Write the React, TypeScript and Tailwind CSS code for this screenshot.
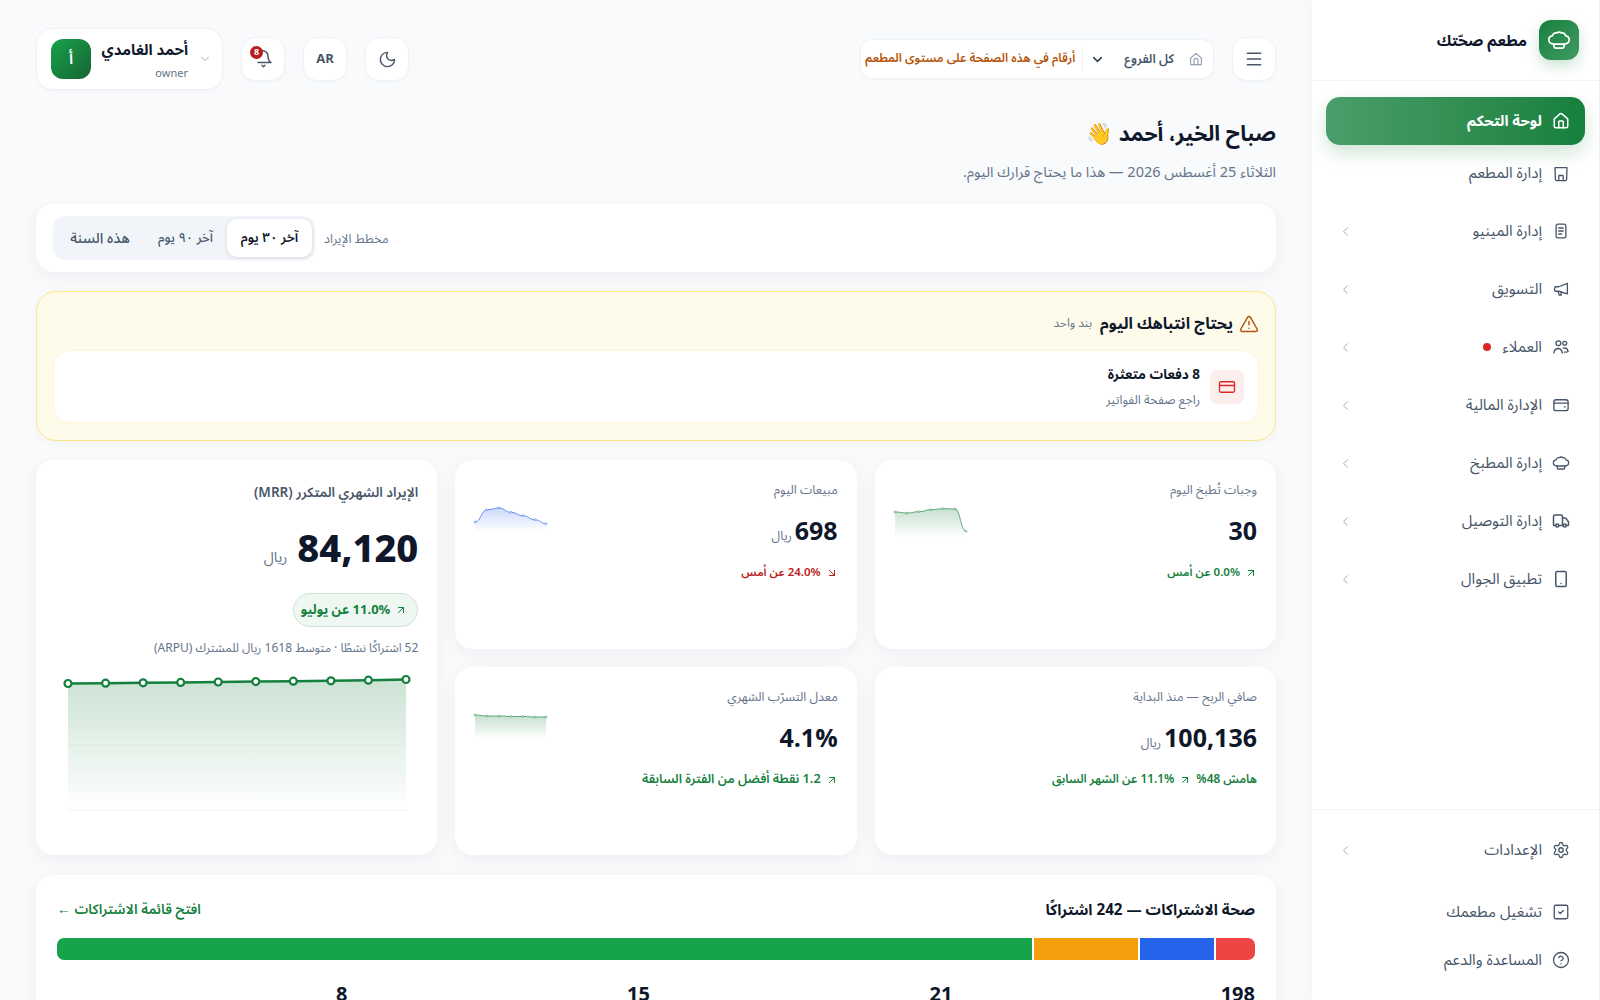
import { ArrowUpRight, ArrowDownRight, ChevronDown, ChevronLeft, CircleHelp, CreditCard, House, Menu, Moon, Settings, Smartphone, SquareCheck, TriangleAlert, Truck } from "lucide-react"
import type { ReactNode } from "react"

type IconProps = { size?: number; className?: string }

function Stroke({ size = 18, className, children }: IconProps & { children: ReactNode }) {
  return (
    <svg width={size} height={size} viewBox="0 0 24 24" fill="none" stroke="currentColor" strokeWidth="1.75" strokeLinecap="round" strokeLinejoin="round" className={className}>
      {children}
    </svg>
  )
}

function HatIcon(props: IconProps) {
  return (
    <Stroke {...props}>
      <path d="M6.5 16C3.8 16 1.8 14.200 1.8 11.800C1.800 9.600 3.300 8 5.400 7.800C6 5.800 7.800 4.600 9.700 4.900C10.900 3.700 13.300 3.700 14.500 4.900C16.400 4.600 18.100 5.800 18.700 7.800C20.800 8 22.200 9.600 22.200 11.800C22.200 14.200 20.200 16 17.500 16Z" />
      <path d="M7 16V18.500C7 19.300 7.700 20 8.500 20H15.500C16.300 20 17 19.300 17 18.500V16" />
    </Stroke>
  )
}

function StoreIcon(props: IconProps) {
  return (
    <Stroke {...props}>
      <path d="M4 3.500H20L19.500 19C19.500 20 18.700 20.800 17.700 20.800H6.300C5.300 20.800 4.500 20 4.500 19Z" />
      <path d="M9 20.800V15C9 14.400 9.400 14 10 14H14C14.600 14 15 14.400 15 15V20.800" />
    </Stroke>
  )
}

function MenuListIcon(props: IconProps) {
  return (
    <Stroke {...props}>
      <rect x="5.500" y="2.800" width="13" height="18.400" rx="2.500" />
      <path d="M9 8H15M9 12H15M9 16H13" />
    </Stroke>
  )
}

function HornIcon(props: IconProps) {
  return (
    <Stroke {...props}>
      <path d="M20.500 4.500V18.500L9 15H5C4.200 15 3.500 14.300 3.500 13.500V10.500C3.500 9.700 4.200 9 5 9H9Z" />
      <path d="M8 15.500L9.500 20H12.500L11.800 16.300" />
    </Stroke>
  )
}

function PeopleIcon(props: IconProps) {
  return (
    <Stroke {...props}>
      <circle cx="8.500" cy="7" r="3.200" />
      <circle cx="17" cy="7" r="2.600" />
      <path d="M2.500 20C3 16.500 5.500 14 8.500 14C11.500 14 13 16.500 13.800 20" />
      <path d="M15 13.500C18 13 20.800 14.800 21.500 18C20 19 18 19 16.500 18.800" />
    </Stroke>
  )
}

function WalletIcon(props: IconProps) {
  return (
    <Stroke {...props}>
      <rect x="2.500" y="5" width="19" height="14.500" rx="3" />
      <path d="M2.500 9.500H21.500M16.500 14.500H17.500" />
    </Stroke>
  )
}

function BranchIcon(props: IconProps) {
  return (
    <Stroke {...props}>
      <path d="M4 10.500L12 3.500L20 10.500V20.500H4Z" />
      <path d="M9 20.500V14C9 12.300 10.300 11 12 11C13.700 11 15 12.300 15 14V20.500" />
    </Stroke>
  )
}

function BellBadge() {
  return (
    <span className="relative block h-5 w-5">
      <svg width="20" height="20" viewBox="0 0 20 20" fill="none" stroke="#475569" strokeWidth="1.4" strokeLinecap="round" strokeLinejoin="round">
        <path d="M9 1.500C12.500 1.800 15 4 15 7.500C15 10 16 12 18 13.500H5" />
        <path d="M9 16.300L10.500 17.800L12 16.300" />
      </svg>
      <span className="absolute -left-[3px] -top-[3px] flex h-[13px] w-[13px] items-center justify-center rounded-full bg-[#b91c1c] text-[9px] font-bold leading-none text-white">8</span>
    </span>
  )
}

type Point = [number, number]

// smooth path through the points, horizontal tangents like a monotone chart curve
function curve(points: Point[]) {
  return points
    .map(([x, y], i) => {
      if (i === 0) return `M${x} ${y}`
      const [px, py] = points[i - 1]
      const mid = (px + x) / 2
      return `C${mid} ${py} ${mid} ${y} ${x} ${y}`
    })
    .join(" ")
}

function Sparkline({ id, color, points, floor }: { id: string; color: string; points: Point[]; floor: number }) {
  const line = curve(points)
  const last = points[points.length - 1]
  return (
    <svg width="72" height="32" viewBox="0 0 72 32" className="shrink-0 overflow-visible">
      <defs>
        <linearGradient id={id} x1="0" y1="0" x2="0" y2="1">
          <stop offset="0%" stopColor={color} stopOpacity="0.24" />
          <stop offset="100%" stopColor={color} stopOpacity="0" />
        </linearGradient>
      </defs>
      <path d={`${line} L${last[0]} ${floor} L${points[0][0]} ${floor} Z`} fill={`url(#${id})`} />
      <path d={line} fill="none" stroke={color} strokeOpacity="0.65" strokeWidth="1" />
      {points.map(([x, y]) => (
        <circle key={x} cx={x} cy={y} r="1" fill="#fff" stroke={color} strokeOpacity="0.65" strokeWidth="0.7" />
      ))}
    </svg>
  )
}

function Trend({ down, size = "text-[11.500px]", children }: { down?: boolean; size?: string; children: ReactNode }) {
  return (
    <div className={`mt-[14px] flex h-[18px] items-center gap-[5px] font-semibold ${size} ${down ? "text-[#b91c1c]" : "text-[#15803d]"}`}>
      {down ? <ArrowDownRight size={12} /> : <ArrowUpRight size={12} />}
      {children}
    </div>
  )
}

function KpiCard({ label, value, unit, spark, children }: { label: string; value: string; unit?: string; spark?: ReactNode; children: ReactNode }) {
  return (
    <div className="flex justify-between rounded-[18px] bg-white pl-[20px] pr-[19px] pt-5 shadow-[0_4px_18px_rgba(15,23,42,0.05)]">
      <div>
        <div className="h-5 text-[12.400px] leading-5 text-[#64748b]">{label}</div>
        <div className="mt-[14px] flex h-9 items-baseline gap-[3px]">
          <span className="text-[25px] font-bold leading-9">{value}</span>
          {unit && <span className="text-[12.500px] text-[#64748b]">{unit}</span>}
        </div>
        {children}
      </div>
      {spark && <div className="mt-[27px]">{spark}</div>}
    </div>
  )
}

const navItems = [
  { label: "إدارة المطعم", icon: StoreIcon, h: "h-[57px]", chevron: false },
  { label: "إدارة المينيو", icon: MenuListIcon, h: "h-[58px]", chevron: true },
  { label: "التسويق", icon: HornIcon, h: "h-[58px]", chevron: true },
  { label: "العملاء", icon: PeopleIcon, h: "h-[58px]", chevron: true, dot: true },
  { label: "الإدارة المالية", icon: WalletIcon, h: "h-[58px]", chevron: true },
  { label: "إدارة المطبخ", icon: HatIcon, h: "h-[58px]", chevron: true },
  { label: "إدارة التوصيل", icon: Truck, h: "h-[58px]", chevron: true },
  { label: "تطبيق الجوال", icon: Smartphone, h: "h-[58px]", chevron: true },
]

const mrrX = [12, 49.6, 87.1, 124.7, 162.2, 199.8, 237.3, 274.9, 312.4, 350]
const mrrY = [13.5, 13.2, 12.8, 12.4, 12, 11.6, 11.2, 10.8, 10.2, 9.500]
const mrrLine = mrrX.map((x, i) => `${i === 0 ? "M" : "L"}${x} ${mrrY[i]}`).join(" ")

const healthBar = [
  { cls: "flex-[8] bg-[#ef4444]" },
  { cls: "flex-[15] bg-[#2563eb]" },
  { cls: "flex-[21] bg-[#f59e0b]" },
  { cls: "flex-[198] bg-[#16a34a]" },
]

const iconButton = "flex h-[44px] w-[44px] items-center justify-center rounded-[14px] border border-[#eef2f6] bg-white text-[#475569] shadow-[0_1px_3px_rgba(15,23,42,0.03)]"

export default function App() {
  return (
    <div dir="rtl" className="flex h-screen overflow-hidden bg-[#f8fafc] font-['Noto_Sans_Arabic','Noto_Sans',sans-serif] text-[#0f172a]">
      <aside className="flex w-72 shrink-0 flex-col border-r border-[#eef2f6] bg-white shadow-[0_0_14px_rgba(15,23,42,0.03)]">
        <div className="flex h-[81px] shrink-0 items-center gap-3 border-b border-[#f1f5f9] pb-[1px] pr-[20px]">
          <div className="flex h-10 w-10 items-center justify-center rounded-xl bg-gradient-to-br from-[#15803d] to-[#3f9a63] text-white shadow-[0_6px_14px_rgba(21,128,61,0.22)]">
            <HatIcon size={24} />
          </div>
          <span className="pt-[4px] text-[15.500px] font-bold">مطعم صحّتك</span>
        </div>

        <nav className="flex flex-1 flex-col pl-[14px] pr-[14px] pt-4">
          <div className="flex h-12 shrink-0 items-center gap-[10px] rounded-[14px] bg-gradient-to-l from-[#15803d] to-[#4a9e6b] pr-[15px] text-[14.800px] font-bold text-white shadow-[0_8px_18px_rgba(21,128,61,0.2)]">
            <House size={18} strokeWidth={2} />
            <span className="pt-[3px]">لوحة التحكم</span>
          </div>
          {navItems.map((item) => (
            <div key={item.label} className={`flex shrink-0 items-center gap-[10px] pl-3 pr-[15px] text-[15.200px] text-[#475569] ${item.h}`}>
              <item.icon size={18} />
              <span>{item.label}</span>
              {item.dot && <span className="mr-[1px] h-2 w-2 rounded-full bg-[#dc2626]" />}
              {item.chevron && <ChevronLeft size={15} strokeWidth={1.5} className="mr-auto text-[#94a3b8]" />}
            </div>
          ))}
        </nav>

        <div className="h-[191px] shrink-0 border-t border-[#f1f5f9] pl-[14px] pr-[14px] pt-[11px] text-[15.200px] text-[#475569]">
          <div className="flex h-[58px] items-center gap-[10px] pl-3 pr-[15px]">
            <Settings size={18} strokeWidth={1.75} />
            <span>الإعدادات</span>
            <ChevronLeft size={15} strokeWidth={1.5} className="mr-auto text-[#94a3b8]" />
          </div>
          <div className="mt-[11px] flex h-11 items-center gap-[10px] pr-[15px]">
            <SquareCheck size={18} strokeWidth={1.75} />
            <span>تشغيل مطعمك</span>
          </div>
          <div className="mt-[4px] flex h-11 items-center gap-[10px] pr-[15px]">
            <CircleHelp size={18} strokeWidth={1.75} />
            <span>المساعدة والدعم</span>
          </div>
        </div>
      </aside>

      <main className="min-w-0 flex-1 px-9 pt-7">
        <header className="flex h-[62px] items-center justify-between">
          <div className="flex items-center gap-[18px]">
            <button className={iconButton}><Menu size={20} strokeWidth={1.75} /></button>
            <div className="flex h-[40px] w-[354px] items-center rounded-xl border border-[#eef2f6] bg-white pr-[9px] shadow-[0_1px_3px_rgba(15,23,42,0.03)]">
              <BranchIcon size={16} className="text-[#94a3b8]" />
              <span className="mr-[14px] whitespace-nowrap text-[12.500px] font-semibold text-[#475569]">كل الفروع</span>
              <ChevronDown size={15} strokeWidth={2.500} className="mr-[19px] text-[#334155]" />
              <span className="mx-[7px] h-6 w-px bg-[#eef2f6]" />
              <span className="whitespace-nowrap text-[12px] font-semibold text-[#b45309]">أرقام في هذه الصفحة على مستوى المطعم</span>
            </div>
          </div>

          <div className="flex items-center gap-[18px]">
            <button className={iconButton}><Moon size={19} strokeWidth={1.75} /></button>
            <button className={`${iconButton} pt-[2px] text-[13px] font-bold`}>AR</button>
            <button className={iconButton}><BellBadge /></button>
            <div className="flex h-[62px] w-[187px] items-center rounded-2xl border border-[#eef2f6] bg-white pl-[14px] pr-[10px] shadow-[0_1px_3px_rgba(15,23,42,0.03)]">
              <ChevronDown size={14} strokeWidth={1.5} className="text-[#94a3b8]" />
              <div className="mr-[10px] flex flex-1 flex-col gap-[6px] pt-[3px]">
                <span className="whitespace-nowrap text-[15px] font-bold leading-5">أحمد الغامدي</span>
                <span className="text-[11px] leading-4 text-[#64748b]">owner</span>
              </div>
              <div className="flex h-10 w-10 shrink-0 items-center justify-center rounded-xl bg-gradient-to-br from-[#16a34a] to-[#166534] text-base font-semibold text-white">أ</div>
            </div>
          </div>
        </header>

        <h1 className="mt-[27px] flex h-9 items-center text-[21.300px] font-bold">صباح الخير، أحمد 👋</h1>
        <p className="mt-[8px] h-6 text-[14.500px] leading-6 text-[#64748b]">الثلاثاء 25 أغسطس 2026 — هذا ما يحتاج قرارك اليوم.</p>

        <section className="mt-[19px] flex h-[68px] items-center justify-end gap-[9px] rounded-[18px] bg-white px-[17px] shadow-[0_4px_18px_rgba(15,23,42,0.05)]">
          <span className="pt-[2px] text-[12.500px] text-[#64748b]">مخطط الإيراد</span>
          <div className="flex h-11 w-[262px] items-center rounded-xl bg-[#f1f5f9] p-[3px]">
            <span className="flex h-[38px] w-[85px] items-center justify-center rounded-[10px] bg-white pt-[2px] text-[13.300px] font-semibold shadow-[0_1px_4px_rgba(15,23,42,0.12)]">آخر ٣٠ يوم</span>
            <span className="flex h-[38px] w-[83px] items-center justify-center pt-[2px] text-[13px] font-medium text-[#475569]">آخر ٩٠ يوم</span>
            <span className="flex h-[38px] flex-1 items-center justify-center pt-[2px] text-[14.500px] font-medium text-[#475569]">هذه السنة</span>
          </div>
        </section>

        <section className="mt-[19px] h-[150px] rounded-[20px] border border-[#fde68a] bg-[#fefbea] px-[16px] pt-[19px] shadow-[0_2px_8px_rgba(15,23,42,0.03)]">
          <div className="flex h-[26px] items-center">
            <TriangleAlert size={20} strokeWidth={1.75} className="text-[#b45309]" />
            <span className="mr-[6px] text-[16px] font-bold">يحتاج انتباهك اليوم</span>
            <span className="mr-2 text-[12px] text-[#64748b]">بند واحد</span>
          </div>
          <div className="mt-[13px] flex h-[73px] items-center gap-[10px] rounded-2xl border border-[#fdf6d8] bg-white pr-[14px]">
            <div className="flex h-[34px] w-[34px] items-center justify-center rounded-lg bg-[#fdeeee] text-[#dc2626]">
              <CreditCard size={18} strokeWidth={1.75} />
            </div>
            <div className="pt-[2px]">
              <div className="text-[13.500px] font-bold leading-5">8 دفعات متعثرة</div>
              <div className="mt-[5px] text-[12.500px] leading-5 text-[#64748b]">راجع صفحة الفواتير</div>
            </div>
          </div>
        </section>

        <section className="mt-[19px] grid grid-cols-3 grid-rows-[189px_188px] gap-[18px]">
          <KpiCard
            label="وجبات تُطبخ اليوم"
            value="30"
            spark={<Sparkline id="meals" color="#15803d" floor={30} points={[[0, 5], [12, 6], [24, 4.7], [36, 2.7], [48, 1.7], [60, 2], [71, 24.3]]} />}
          >
            <Trend>0.0% عن أمس</Trend>
          </KpiCard>

          <KpiCard
            label="مبيعات اليوم"
            value="698"
            unit="ريال"
            spark={<Sparkline id="sales" color="#2563eb" floor={25} points={[[0, 15], [12, 2.7], [24, 1], [36, 5.3], [48, 8.7], [60, 12.7], [71, 16.7]]} />}
          >
            <Trend down>24.0% عن أمس</Trend>
          </KpiCard>

          <div className="row-span-2 rounded-[18px] bg-white px-[19px] pt-[23px] shadow-[0_4px_18px_rgba(15,23,42,0.05)]">
            <div className="h-5 text-[13.500px] font-semibold leading-5 text-[#475569]">الإيراد الشهري المتكرر (MRR)</div>
            <div className="mt-[22px] flex h-[50px] items-baseline gap-[10px]">
              <span className="text-[38px] font-extrabold leading-[50px]">84,120</span>
              <span className="text-[14.500px] text-[#64748b]">ريال</span>
            </div>
            <div className="mt-[18px] flex h-[34px] w-[125px] items-center gap-[5px] rounded-full border border-[#cfe3d6] bg-[#eef7f1] pr-[10px] text-[13px] font-bold text-[#15803d]">
              <ArrowUpRight size={12} />
              <span className="whitespace-nowrap pt-[2px]">11.0% عن يوليو</span>
            </div>
            <div className="mt-3 h-5 text-[12px] leading-5 text-[#64748b]">52 اشتراكًا نشطًا · متوسط 1618 ريال للمشترك (ARPU)</div>
            <svg width="362" height="150" viewBox="0 0 362 150" className="mt-[11px]">
              <defs>
                <linearGradient id="mrr" x1="0" y1="0" x2="0" y2="1">
                  <stop offset="0%" stopColor="#15803d" stopOpacity="0.22" />
                  <stop offset="100%" stopColor="#15803d" stopOpacity="0" />
                </linearGradient>
              </defs>
              <path d={`${mrrLine} L350 140 L12 140 Z`} fill="url(#mrr)" />
              <path d="M12 75H350" stroke="#dbe5de" strokeOpacity="0.7" />
              <path d="M12 140H350" stroke="#eef2f6" />
              <path d={mrrLine} fill="none" stroke="#15803d" strokeWidth="2.500" />
              {mrrX.map((x, i) => (
                <circle key={x} cx={x} cy={mrrY[i]} r="3.500" fill="#fff" stroke="#15803d" strokeWidth="2.200" />
              ))}
            </svg>
          </div>

          <KpiCard label="صافي الربح — منذ البداية" value="100,136" unit="ريال">
            <Trend size="text-[11.800px]">
              <span className="order-first">هامش 48%</span>
              <span className="whitespace-nowrap">11.1% عن الشهر السابق</span>
            </Trend>
          </KpiCard>

          <KpiCard
            label="معدل التسرّب الشهري"
            value="4.1%"
            spark={<Sparkline id="churn" color="#15803d" floor={25} points={[[0, 1], [12, 2], [24, 2], [36, 2.5], [48, 2.5], [60, 3], [71, 3]]} />}
          >
            <Trend size="text-[12.700px]">1.2 نقطة أفضل من الفترة السابقة</Trend>
          </KpiCard>
        </section>

        <section className="mt-5 h-[300px] rounded-[18px] bg-white px-[21px] pt-[22px] shadow-[0_4px_18px_rgba(15,23,42,0.05)]">
          <div className="flex h-6 items-center justify-between">
            <span className="pt-[2px] text-[15.200px] font-bold">صحة الاشتراكات — 242 اشتراكًا</span>
            <span className="pt-[3px] text-[13.800px] font-semibold text-[#15803d]">افتح قائمة الاشتراكات ←</span>
          </div>
          <div className="mt-[17px] flex h-[22px] gap-[2px] overflow-hidden rounded-[7px]">
            {healthBar.map((seg) => (
              <div key={seg.cls} className={seg.cls} />
            ))}
          </div>
          <div className="mt-[21px] grid grid-cols-4 gap-3 text-[20px] font-bold leading-7">
            <div>198</div>
            <div>21</div>
            <div>15</div>
            <div>8</div>
          </div>
        </section>
      </main>
    </div>
  )
}
